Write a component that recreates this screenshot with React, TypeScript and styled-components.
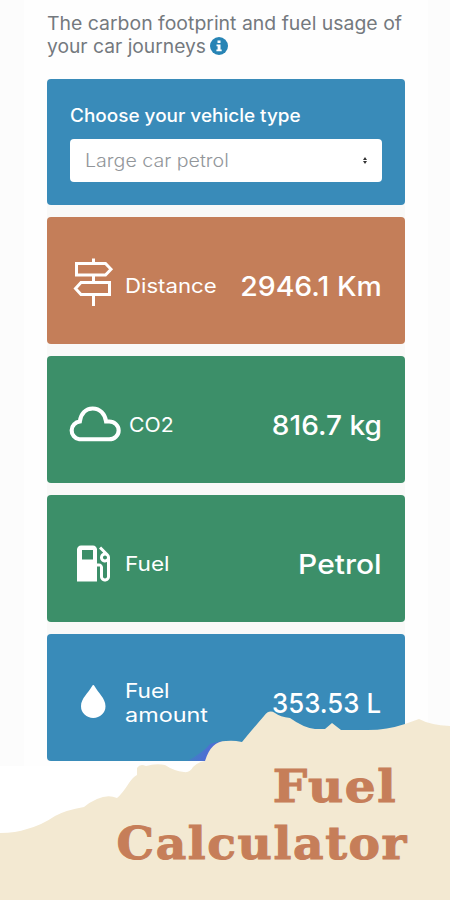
import React from "react";
import styled, { createGlobalStyle } from "styled-components";

const Global = createGlobalStyle`
  * { box-sizing: border-box; }
  body { margin: 0; background: #fff; font-family: Inter, "Open Sans", sans-serif; }
`;

const Screen = styled.main`
  position: relative;
  width: 450px;
  height: 900px;
  overflow: hidden;
  background: #fff;
`;

const Backdrop = styled.div`
  height: 766px;
  padding: 0 22px 0 24px;
  background: #fcfcfc;
`;

const Panel = styled.section`
  height: 766px;
  padding: 12px 23px 0;
  background: #fefefe;
`;

const Intro = styled.p`
  margin: 0;
  height: 66.5px;
  color: #74797e;
  line-height: 23px;
  white-space: nowrap;
`;

const Fit = styled.span<{ $size: number; $weight?: number; $stretch?: number; $right?: boolean }>`
  display: inline-block;
  font-size: ${(p) => p.$size}px;
  font-weight: ${(p) => p.$weight ?? 400};
  transform: scaleX(${(p) => p.$stretch ?? 1});
  transform-origin: ${(p) => (p.$right ? "right" : "left")} center;
  white-space: nowrap;
`;

const IntroLine = styled.span`
  display: flex;
  height: 23px;
`;

const IntroLead = styled.span`
  width: 163px;
`;

const InfoIcon = styled.svg`
  display: block;
  width: 18px;
  height: 18px;
  margin-top: 2px;
`;

const Cards = styled.div`
  display: flex;
  flex-direction: column;
  gap: 12px;
  width: 358px;
  background: #f9f9f8;
`;

const Card = styled.article<{ $color: string }>`
  height: 126.9px;
  border-radius: 4px;
  background: ${(p) => p.$color};
  color: #fff;
`;

const PickerCard = styled(Card)`
  padding: 25px 23px 0;
`;

const PickerLabel = styled.div`
  height: 35.5px;
  line-height: 24px;
`;

const Picker = styled.div`
  display: flex;
  align-items: center;
  justify-content: space-between;
  width: 312px;
  height: 43px;
  padding: 0 15px;
  border-radius: 4px;
  background: #fff;
  color: #92969a;
`;

const MetricCard = styled(Card)`
  display: grid;
  grid-template-columns: 1fr auto;
  align-items: center;
  padding: 11px 23.5px 0 23px;
`;

const MetricName = styled.div`
  display: flex;
  align-items: center;
`;

const IconSlot = styled.span<{ $width: number }>`
  width: ${(p) => p.$width}px;
  height: 52px;
  svg { display: block; overflow: visible; }
`;

const Label = styled.span`
  display: flex;
  flex-direction: column;
  line-height: 24px;
`;

const Value = styled.span`
  padding-top: 4px;
  text-align: right;
  line-height: 36px;
`;

const Landscape = styled.svg`
  position: absolute;
  left: 0;
  top: 700px;
`;

const Title = styled.h1`
  position: absolute;
  top: 758px;
  right: 41.5px;
  display: flex;
  flex-direction: column;
  align-items: flex-end;
  margin: 0;
  color: #c67e59;
  font-family: "DejaVu Serif", serif;
  letter-spacing: 1.5px;
  line-height: 57px;
  -webkit-text-stroke: 1px #c67e59;
`;

const TitleLine = styled.span<{ $inset?: number }>`
  display: flex;
  height: 57px;
  margin-right: ${(p) => p.$inset ?? 0}px;
`;

const SignIcon = () => (
  <svg width="52" height="52" viewBox="0 0 52 52" fill="none" stroke="#fff" strokeWidth="3">
    <path d="M6.500 3.500H35.500L41 9.300l-5.500 5.700H6.500zM39.500 22.500V34.500H11L5.500 28.500l5.500-6zM23.500-1.500v5M23.500 15v7.500M23.500 34.500v11.500" />
  </svg>
);

const CloudIcon = () => (
  <svg width="52" height="52" viewBox="0 0 52 52" fill="none" stroke="#fff" strokeWidth="4">
    <path d="M10.500 40.300H39.500A9.200 8.900 0 0 0 39.500 22.500H36.500C35.500 15 30.500 9.500 23.500 9.500S12 15 11 22.500A9 9 0 0 0 10.500 40.300z" transform="translate(-1.500 0) scale(1.03 1)" />
  </svg>
);

const PumpIcon = () => (
  <svg width="52" height="52" viewBox="0 0 52 52">
    <path
      fill="#fff"
      transform="translate(-1 1.500) scale(2)"
      d="M19.770 7.230l.010-.010-3.720-3.720L15 4.560l2.110 2.110c-.940.360-1.610 1.260-1.610 2.330 0 1.380 1.120 2.500 2.500 2.500.360 0 .690-.080 1-.210v7.210c0 .550-.450 1-1 1s-1-.450-1-1V14c0-1.100-.900-2-2-2h-1V5c0-1.100-.900-2-2-2H6c-1.100 0-2 .900-2 2v16h10v-7.500h1.500v5c0 1.380 1.120 2.500 2.500 2.500s2.500-1.120 2.500-2.500V9c0-.690-.280-1.320-.730-1.770zM12 10H6.500V5.300H12zM18 10c-.550 0-1-.450-1-1s.450-1 1-1 1 .450 1 1-.450 1-1 1z"
    />
  </svg>
);

const DropIcon = () => (
  <svg width="52" height="52" viewBox="0 0 52 52">
    <path fill="#fff" d="M22 9.300Q23.300 6.700 24.600 9.300C28 15.500 35.500 21.500 35.500 29.200a12.250 11.700 0 0 1-24.500 0C11 21.500 18.600 15.500 22 9.300z" />
  </svg>
);

const blue = "#398bb9";
const green = "#3c8f69";
const clay = "#c47e59";

const metrics = [
  { color: clay, icon: <SignIcon />, slot: 54.5, label: [{ t: "Distance", s: 1.11 }], value: "2946.1 Km", s: 1.035 },
  { color: green, icon: <CloudIcon />, slot: 58.5, label: [{ t: "CO2", s: 1.06 }], value: "816.7 kg", s: 1.02 },
  { color: green, icon: <PumpIcon />, slot: 54.5, label: [{ t: "Fuel", s: 1.13 }], value: "Petrol", s: 1.09 },
  { color: blue, icon: <DropIcon />, slot: 54.5, label: [{ t: "Fuel", s: 1.13 }, { t: "amount", s: 1.17 }], value: "353.53 L", s: 0.94 },
];

export default function App() {
  return (
    <Screen>
      <Global />
      <Backdrop>
        <Panel>
          <Intro>
            <IntroLine><Fit $size={18.5} $stretch={1.05}>The carbon footprint and fuel usage of</Fit></IntroLine>
            <IntroLine>
              <IntroLead><Fit $size={18.5} $stretch={1.04}>your car journeys</Fit></IntroLead>
              <InfoIcon viewBox="0 0 18 18">
                <circle cx="9" cy="9" r="9" fill="#2784b5" />
                <path fill="#fff" d="M7.500 3.500h3v2.600h-3zM6.500 7.500h4v5h1.200v1.700H6.400v-1.700h1.200V9.200H6.500z" />
              </InfoIcon>
            </IntroLine>
          </Intro>
          <Cards>
            <PickerCard $color={blue}>
              <PickerLabel><Fit $size={18} $weight={500} $stretch={1.053}>Choose your vehicle type</Fit></PickerLabel>
              <Picker>
                <Fit $size={18} $weight={300} $stretch={1.09}>Large car petrol</Fit>
                <svg width="4" height="7" viewBox="0 0 4 7"><path d="M0 3l2-3 2 3zM0 4h4L2 7z" fill="#333" /></svg>
              </Picker>
            </PickerCard>
            {metrics.map((m) => (
              <MetricCard key={m.value} $color={m.color}>
                <MetricName>
                  <IconSlot $width={m.slot}>{m.icon}</IconSlot>
                  <Label>
                    {m.label.map((l) => <Fit key={l.t} $size={20} $stretch={l.s}>{l.t}</Fit>)}
                  </Label>
                </MetricName>
                <Value><Fit $size={27.5} $weight={500} $stretch={m.s} $right>{m.value}</Fit></Value>
              </MetricCard>
            ))}
          </Cards>
        </Panel>
      </Backdrop>
      <Landscape width="450" height="200" viewBox="0 700 450 200">
        <defs>
          <linearGradient id="glow" x1="0" x2="1" y1="0.3" y2="0.6">
            <stop offset="0" stopColor="#4d6fd3" stopOpacity="0" />
            <stop offset="0.6" stopColor="#4d6fd3" />
          </linearGradient>
        </defs>
        <path d="M187 761Q204 752 210 744L222 741L212 761z" fill="url(#glow)" />
        <path fill="#f3e9d2" d="M0 833Q16 833 27 829Q42 825 55 816Q66 810 84 807Q90 802 97 799Q108 794 117 798Q122 794 129 783Q133 777 137 775V768Q140 763 146 766Q156 763 165 765Q174 771 184 772Q190 773 193 767Q198 762 205 761Q211 741 226 741Q233 740 242 742Q251 731 264 716Q269 709 275 713Q280 717 290 718Q304 728 315 729H325L332 723L341 730H368Q387 730 405 724L419 719Q430 725 450 726V900H0z" />
      </Landscape>
      <Title>
        <TitleLine $inset={11}><Fit $size={44.5} $weight={700} $stretch={1.09} $right>Fuel</Fit></TitleLine>
        <TitleLine><Fit $size={44.5} $weight={700} $stretch={1.06} $right>Calculator</Fit></TitleLine>
      </Title>
    </Screen>
  );
}
